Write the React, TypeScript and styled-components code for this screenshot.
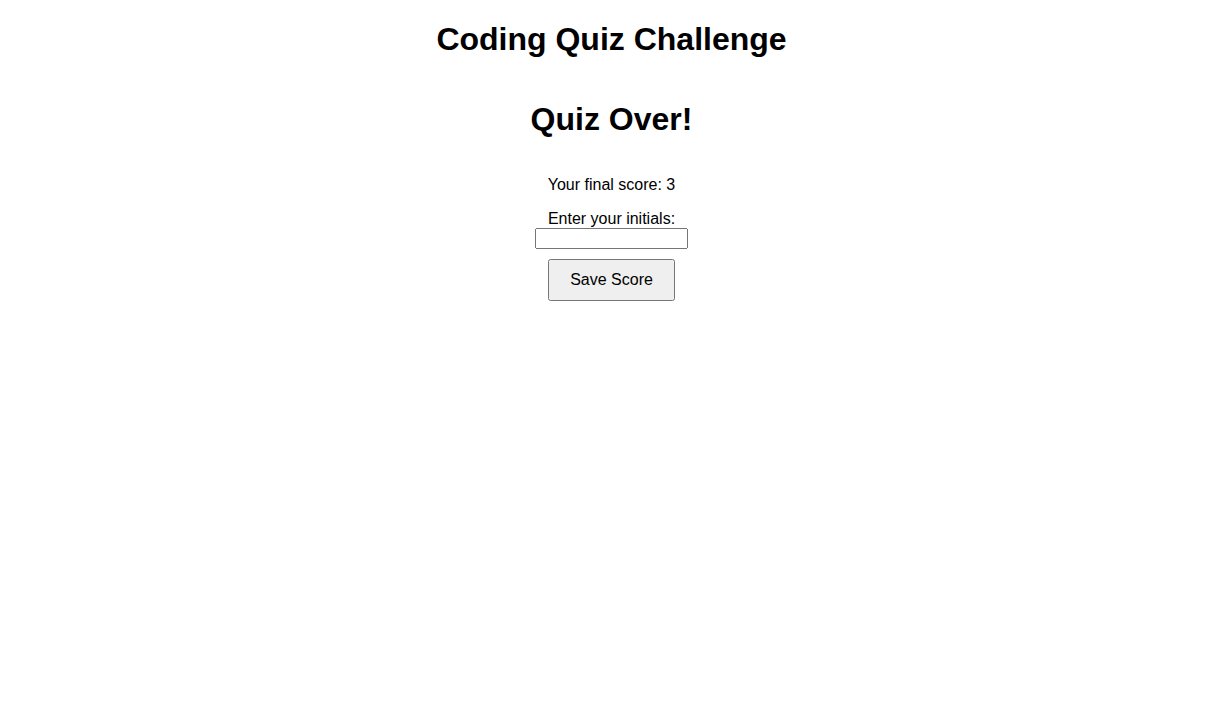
import React, { useState } from "react"
import styled, { createGlobalStyle } from "styled-components"

const GlobalStyle = createGlobalStyle`
  body {
    margin: 0 8px 8px;
    font-family: "Liberation Sans", Arial, sans-serif;
    color: #000;
    background: #fff;
  }
`

const Header = styled.header`
  text-align: center;
`

const Title = styled.h1`
  font-size: 32px;
  margin: 0.67em 0;
`

const Main = styled.main`
  display: flex;
  flex-direction: column;
  align-items: center;
`

const Heading = styled.h1`
  font-size: 32px;
  margin: 0.67em 0;
`

const ScoreText = styled.p`
  font-size: 16px;
  margin: 16px 0;
`

const ScoreForm = styled.form`
  display: flex;
  flex-direction: column;
  align-items: center;
`

const InitialsLabel = styled.label`
  font-size: 16px;
`

const InitialsInput = styled.input`
  box-sizing: border-box;
  width: 153px;
  height: 21px;
`

const SaveButton = styled.button`
  margin-top: 10px;
  padding: 10px 20px;
  font-family: "Liberation Sans", Arial, sans-serif;
  font-size: 16px;
  cursor: pointer;
`

export default function App() {
  const [initials, setInitials] = useState("")
  const score = 3

  return (
    <>
      <GlobalStyle />
      <Header>
        <Title>Coding Quiz Challenge</Title>
      </Header>
      <Main>
        <Heading>Quiz Over!</Heading>
        <ScoreText>Your final score: {score}</ScoreText>
        <ScoreForm onSubmit={e => e.preventDefault()}>
          <InitialsLabel htmlFor="initials">Enter your initials:</InitialsLabel>
          <InitialsInput
            id="initials"
            type="text"
            value={initials}
            onChange={e => setInitials(e.target.value)}
          />
          <SaveButton type="submit">Save Score</SaveButton>
        </ScoreForm>
      </Main>
    </>
  )
}
